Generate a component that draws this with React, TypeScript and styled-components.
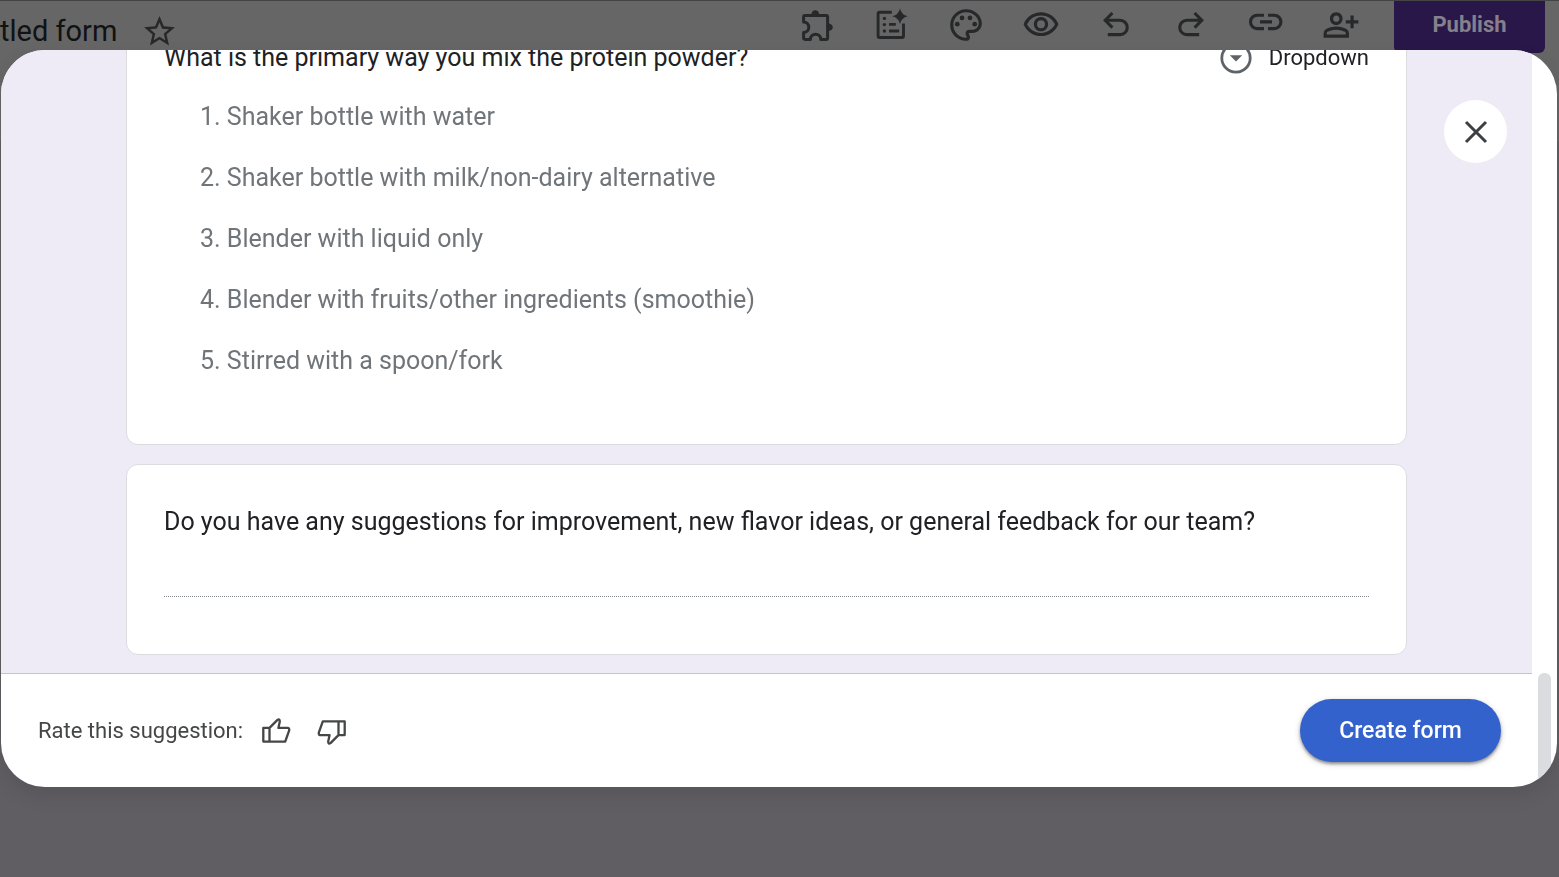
import React from "react";
import styled, { createGlobalStyle } from "styled-components";
import {
  MdOutlinePalette,
  MdOutlinePersonAddAlt,
  MdOutlineVisibility,
  MdStarBorder,
} from "react-icons/md";

const sans = `Roboto, "Liberation Sans", sans-serif`;

const GlobalStyle = createGlobalStyle`
  *, *::before, *::after { box-sizing: border-box; }
  body { margin: 0; background: #605e63; font-family: ${sans}; overflow: hidden; }
  button { font-family: inherit; border: 0; padding: 0; cursor: pointer; }
  h1, h2, p, ol { margin: 0; font-weight: 400; }
`;

const Page = styled.div`
  min-height: 100vh;
`;

const TopBar = styled.header`
  display: flex;
  align-items: flex-start;
  justify-content: space-between;
  height: 141px;
  padding-right: 14px;
  background: #666666;
  border-top: 1px solid #444446;
`;

const TitleGroup = styled.div`
  display: flex;
  align-items: center;
  gap: 23px;
  height: 60px;
`;

const FormTitle = styled.h1`
  font-size: 29px;
  line-height: 36px;
  color: #111213;
  white-space: nowrap;
`;

const Tools = styled.div`
  display: flex;
`;

const IconButton = styled.button<{ $width: number; $color?: string }>`
  display: flex;
  align-items: center;
  justify-content: center;
  width: ${(p) => p.$width}px;
  height: 48px;
  background: transparent;
  color: ${(p) => p.$color ?? "#26282a"};
`;

const PublishButton = styled.button`
  width: 151px;
  height: 52px;
  margin-left: 16px;
  padding-bottom: 5px;
  border-radius: 0 0 6px 6px;
  background: #291749;
  color: #85808c;
  font-size: 22px;
  font-weight: 700;
`;

const Overlay = styled.div`
  position: fixed;
  inset: 0;
  display: flex;
  padding: 50px 2px 90px 1px;
`;

const Dialog = styled.section`
  position: relative;
  display: flex;
  flex: 1;
  min-width: 0;
  overflow: hidden;
  border-radius: 44px;
  background: #ffffff;
  box-shadow: 0 8px 20px 0 rgba(0, 0, 0, 0.1);
`;

const Main = styled.div`
  display: flex;
  flex: 1;
  flex-direction: column;
  min-width: 0;
`;

const Preview = styled.div`
  display: flex;
  flex: 1;
  flex-direction: column;
  justify-content: flex-end;
  gap: 19px;
  min-height: 0;
  overflow: hidden;
  padding: 0 125px 18px;
  background: #eeebf6;
`;

const Card = styled.article`
  flex-shrink: 0;
  padding: 37px;
  border: 1px solid #dadce0;
  border-radius: 12px;
  background: #ffffff;
`;

const QuestionRow = styled.div`
  display: flex;
  align-items: center;
  justify-content: space-between;
`;

const Question = styled.h2`
  font-size: 25px;
  line-height: 40px;
  color: #202124;
`;

const QuestionType = styled.div`
  display: flex;
  align-items: center;
  gap: 15px;
  font-size: 22px;
  line-height: 40px;
  color: #202124;
`;

const Options = styled.ol`
  padding: 8px 0 16px 36px;
  list-style: none;
`;

const Option = styled.li`
  font-size: 25px;
  line-height: 61px;
  color: #70757a;
`;

const AnswerLine = styled.div`
  height: 55px;
  margin-bottom: 20px;
  border-bottom: 1px dotted #80868b;
`;

const Footer = styled.footer`
  display: flex;
  flex-shrink: 0;
  align-items: center;
  justify-content: space-between;
  height: 114px;
  padding: 0 31px 0 37px;
  border-top: 1px solid #c4c4ca;
`;

const Rating = styled.div`
  display: flex;
  align-items: center;
`;

const RatingLabel = styled.p`
  margin-right: 5px;
  font-size: 22px;
  line-height: 32px;
  color: #444746;
`;

const CreateButton = styled.button`
  width: 201px;
  height: 63px;
  border-radius: 32px;
  background: #3462cc;
  color: #ffffff;
  font-size: 23px;
  font-weight: 500;
  box-shadow: 0 2px 3px rgba(0, 0, 0, 0.35), 0 2px 6px rgba(0, 0, 0, 0.2);
`;

const ScrollTrack = styled.div`
  display: flex;
  align-items: flex-end;
  width: 25px;
  padding-left: 6px;
`;

const ScrollThumb = styled.div`
  width: 13px;
  height: 114px;
  border-radius: 6px 6px 0 0;
  background: #dadce0;
`;

const CloseButton = styled.button`
  position: absolute;
  top: 50px;
  right: 50px;
  display: flex;
  align-items: center;
  justify-content: center;
  width: 63px;
  height: 63px;
  border-radius: 50%;
  background: #ffffff;
`;

const PuzzleIcon = () => (
  <svg width="36" height="36" viewBox="-1 0 36 36" fill="none" aria-hidden="true">
    <path
      d="M4.6 15V10Q4.6 8.6 6 8.6H27.2Q28.6 8.6 28.6 10V31Q28.6 32.4 27.2 32.4H21.8C21.8 29.4 19.4 27.2 16.6 27.2S11.4 29.4 11.4 32.4H6Q4.6 32.4 4.6 31V25.6C7.6 25.6 9.8 23.2 9.8 20.3S7.6 15 4.6 15Z"
      stroke="currentColor"
      strokeWidth="3"
      strokeLinejoin="round"
    />
    <path d="M12.4 8a3.9 4.8 0 0 1 7.8 0zM29 16.4a4.8 3.9 0 0 1 0 7.8z" fill="currentColor" />
  </svg>
);

const SuggestIcon = () => (
  <svg width="36" height="36" viewBox="-1 0 36 36" fill="none" aria-hidden="true">
    <path
      d="M17.8 5.2H5.6Q4.1 5.2 4.1 6.7V29Q4.1 30.5 5.6 30.5H28Q29.5 30.5 29.5 29V16.5M15 17.4H21.8M15 24H25.2"
      stroke="currentColor"
      strokeWidth="2.9"
    />
    <path
      d="M26 1.6Q27.4 7.9 33.7 9.3Q27.4 10.7 26 17Q24.6 10.7 18.3 9.3Q24.6 7.9 26 1.6Z"
      fill="currentColor"
    />
    <circle cx="10.4" cy="11.4" r="1.7" fill="currentColor" />
    <circle cx="10.4" cy="17.6" r="1.7" fill="currentColor" />
    <circle cx="10.4" cy="24" r="1.7" fill="currentColor" />
  </svg>
);

const UndoIcon = ({ flipped = false }: { flipped?: boolean }) => (
  <svg width="36" height="36" viewBox="0 0 36 36" fill="none" aria-hidden="true">
    <path
      d="M14.4 6L7.2 13.3L14.4 20.6M7.2 13.3H22.1A7.15 7.15 0 0 1 22.1 27.6H9.8"
      transform={flipped ? "translate(36 0) scale(-1 1)" : undefined}
      stroke="currentColor"
      strokeWidth="3.1"
    />
  </svg>
);

const LinkIcon = () => (
  <svg width="38" height="44" viewBox="0 3 38 44" fill="none" aria-hidden="true">
    <path
      d="M17 15.2H10.2A6.7 6.7 0 0 0 10.2 28.6H17M21 15.2H27.2A6.7 6.7 0 0 1 27.2 28.6H21M13 21.9H25"
      stroke="currentColor"
      strokeWidth="3.1"
    />
  </svg>
);

const ThumbIcon = ({ down = false }: { down?: boolean }) => (
  <svg width="30" height="32" viewBox="0 0 30 32" fill="none" aria-hidden="true">
    <path
      d="M2.3 10.9H8.5L16.5 2.9Q18.6 1.5 18.8 4.4L17.4 10.9H27Q28.4 11 28.2 13.4L24.2 24.6H2.3ZM8.5 10.9V24.6"
      transform={down ? "translate(30 31) rotate(180)" : "translate(0 2)"}
      stroke="currentColor"
      strokeWidth="2.3"
      strokeLinejoin="round"
    />
  </svg>
);

const DropdownIcon = () => (
  <svg width="34" height="34" viewBox="0 0 34 34" fill="none" aria-hidden="true">
    <circle cx="16" cy="17" r="14.2" stroke="#5f6368" strokeWidth="2.8" />
    <path d="M9.8 14.3H22.2L16 20.6Z" fill="#5f6368" />
  </svg>
);

const CloseIcon = () => (
  <svg width="24" height="24" viewBox="0 0 24 24" fill="none" aria-hidden="true">
    <path d="M2 2L22 22M22 2L2 22" stroke="#3c4043" strokeWidth="3" />
  </svg>
);

const tools = [
  { label: "Add-ons", icon: <PuzzleIcon /> },
  { label: "Help me create a form", icon: <SuggestIcon /> },
  { label: "Customize theme", icon: <MdOutlinePalette size={38} /> },
  { label: "Preview", icon: <MdOutlineVisibility size={38} /> },
  { label: "Undo", icon: <UndoIcon /> },
  { label: "Redo", icon: <UndoIcon flipped /> },
  { label: "Copy responder link", icon: <LinkIcon /> },
  { label: "Share", icon: <MdOutlinePersonAddAlt size={38} /> },
];

const options = [
  "Shaker bottle with water",
  "Shaker bottle with milk/non-dairy alternative",
  "Blender with liquid only",
  "Blender with fruits/other ingredients (smoothie)",
  "Stirred with a spoon/fork",
];

export default function App() {
  return (
    <Page>
      <GlobalStyle />
      <TopBar>
        <TitleGroup>
          <FormTitle>tled form</FormTitle>
          <IconButton $width={38} aria-label="Star">
            <MdStarBorder size={37} />
          </IconButton>
        </TitleGroup>
        <Tools>
          {tools.map((tool) => (
            <IconButton key={tool.label} $width={75} aria-label={tool.label}>
              {tool.icon}
            </IconButton>
          ))}
          <PublishButton>Publish</PublishButton>
        </Tools>
      </TopBar>

      <Overlay>
        <Dialog role="dialog" aria-label="Suggested form">
          <Main>
            <Preview>
              <Card>
                <QuestionRow>
                  <Question>What is the primary way you mix the protein powder?</Question>
                  <QuestionType>
                    <DropdownIcon />
                    Dropdown
                  </QuestionType>
                </QuestionRow>
                <Options>
                  {options.map((option, index) => (
                    <Option key={option}>
                      {index + 1}. {option}
                    </Option>
                  ))}
                </Options>
              </Card>
              <Card>
                <Question>
                  Do you have any suggestions for improvement, new flavor ideas, or general
                  feedback for our team?
                </Question>
                <AnswerLine />
              </Card>
            </Preview>
            <Footer>
              <Rating>
                <RatingLabel>Rate this suggestion:</RatingLabel>
                <IconButton $width={56} $color="#444746" aria-label="Good suggestion">
                  <ThumbIcon />
                </IconButton>
                <IconButton $width={56} $color="#444746" aria-label="Bad suggestion">
                  <ThumbIcon down />
                </IconButton>
              </Rating>
              <CreateButton>Create form</CreateButton>
            </Footer>
          </Main>
          <ScrollTrack>
            <ScrollThumb />
          </ScrollTrack>
          <CloseButton aria-label="Close">
            <CloseIcon />
          </CloseButton>
        </Dialog>
      </Overlay>
    </Page>
  );
}
